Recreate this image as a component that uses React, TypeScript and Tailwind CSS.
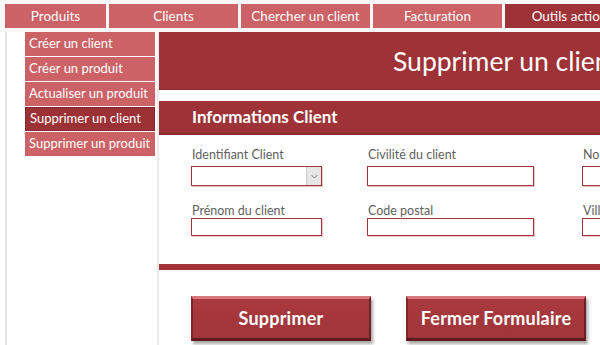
import React from 'react';

const tabs = [
  { label: 'Produits', w: 'w-[101px]', active: false },
  { label: 'Clients', w: 'w-[129px]', active: false },
  { label: 'Chercher un client', w: 'w-[129px]', active: false },
  { label: 'Facturation', w: 'w-[129px]', active: false },
  { label: 'Outils action', w: 'w-[129px]', active: true },
];

const menu = [
  { label: 'Créer un client', active: false },
  { label: 'Créer un produit', active: false },
  { label: 'Actualiser un produit', active: false },
  { label: 'Supprimer un client', active: true },
  { label: 'Supprimer un produit', active: false },
];

function Field({ label, w, h, combo }: { label: string; w: string; h: string; combo?: boolean }) {
  return (
    <div className={`flex flex-col shrink-0 ${w}`}>
      <span className="text-[12.5px] leading-[15px] text-[#5f5f5f] pl-[1px] whitespace-nowrap">{label}</span>
      <div className={`${h} border border-[#a5353a] bg-white flex justify-end shadow-[1px_1px_0_#e8c4c5]`}>
        {combo && (
          <div className="w-[15px] h-full bg-[#e6e6e6] border-l border-[#cfcfcf] flex items-center justify-center">
            <svg width="7" height="5" viewBox="0 0 7 5">
              <path d="M0.5 1 L3.5 4 L6.5 1" fill="none" stroke="#7a7a7a" strokeWidth="1" />
            </svg>
          </div>
        )}
      </div>
    </div>
  );
}

function BevelButton({ label }: { label: string }) {
  return (
    <button className="w-[180px] h-[45px] shrink-0 bg-gradient-to-b from-[#a9393d] to-[#a0353a] border-t-[3px] border-t-[#d8787b] border-l-2 border-l-[#7d2629] border-r-2 border-r-[#6e2124] border-b-[3px] border-b-[#5e1a1d] shadow-[2px_3px_3px_rgba(0,0,0,0.35)] text-white font-bold text-[18px] tracking-[0.2px]">
      {label}
    </button>
  );
}

export default function App() {
  return (
    <div className="w-[600px] h-[345px] overflow-hidden bg-white font-['Lato','Liberation_Sans',sans-serif] flex flex-col">
      {/* tab bar */}
      <div className="flex gap-[3px] pl-[5px] pt-[4px] h-[32px] shrink-0 bg-[#f7f7f7]">
        {tabs.map((t) => (
          <div
            key={t.label}
            className={`${t.w} h-[24px] shrink-0 flex items-center justify-center text-white text-[13.5px] whitespace-nowrap ${
              t.active ? 'bg-[#9e3236]' : 'bg-[#cc6265]'
            }`}
          >
            {t.label}
          </div>
        ))}
      </div>

      <div className="flex flex-1 min-h-0">
        {/* left nav */}
        <div className="ml-[5px] w-[154px] shrink-0 border-l-2 border-l-[#e3e3e3] border-r-2 border-r-[#ececec] pl-[18px]">
          <div className="flex flex-col gap-[1px] w-[130px]">
            {menu.map((m) => (
              <div
                key={m.label}
                className={`h-[24px] flex items-center pl-[4px] text-white text-[13px] whitespace-nowrap ${
                  m.active
                    ? 'bg-[#9b3135] border border-dotted border-[#6d1e21]'
                    : 'bg-[#cc6265]'
                }`}
              >
                {m.label}
              </div>
            ))}
          </div>
        </div>

        {/* form */}
        <div className="flex-1 min-w-0 overflow-hidden">
          <div className="h-[58px] bg-[#9e3236] flex items-center pl-[234px] pt-[3px] border-b border-b-[#8a2a2e]">
            <span className="text-white text-[26.5px] whitespace-nowrap">Supprimer un client</span>
          </div>

          <div className="mt-[11px] h-[34px] bg-[#9e3236] border-b-2 border-b-[#862a2d] flex items-center pl-[33px]">
            <span className="text-white font-bold text-[17px]">Informations Client</span>
          </div>

          <div className="pl-[32px] pt-[12px] flex flex-col">
            <div className="flex w-[640px] [&>*+*]:ml-[45px] [&>*:nth-child(3)]:ml-[48px] [&>div>span]:mb-[4px]">
              <Field label="Identifiant Client" w="w-[131px]" h="h-[20px]" combo />
              <Field label="Civilité du client" w="w-[167px]" h="h-[20px]" />
              <Field label="Nom du client" w="w-[167px]" h="h-[20px]" />
            </div>
            <div className="mt-[17px] flex w-[640px] [&>*+*]:ml-[45px] [&>*:nth-child(3)]:ml-[48px]">
              <Field label="Prénom du client" w="w-[131px]" h="h-[18px]" />
              <Field label="Code postal" w="w-[167px]" h="h-[18px]" />
              <Field label="Ville" w="w-[167px]" h="h-[18px]" />
            </div>
          </div>

          <div className="mt-[28px] h-[6px] bg-[#a33539]" />

          <div className="pl-[32px] pt-[26px] flex gap-[35px]">
            <BevelButton label="Supprimer" />
            <BevelButton label="Fermer Formulaire" />
          </div>
        </div>
      </div>
    </div>
  );
}
